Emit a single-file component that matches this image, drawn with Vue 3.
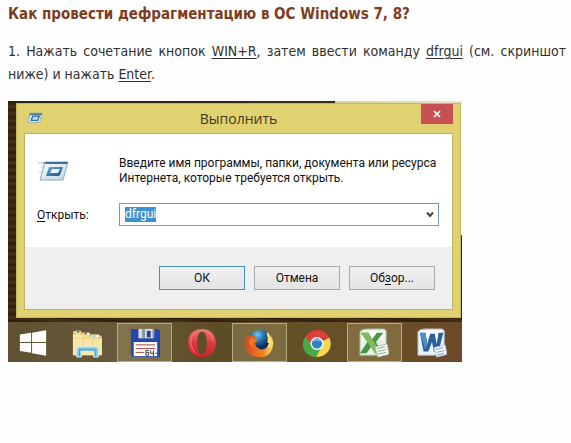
<script setup>
import { onMounted, ref } from 'vue'

const command = ref('dfrgui')
const field = ref(null)

onMounted(() => {
  field.value.focus()
  field.value.select()
})
</script>

<template>
  <main class="article">
    <h1 class="title">Как провести дефрагментацию в ОС Windows 7, 8?</h1>
    <p class="step">
      1. Нажать сочетание кнопок <u>WIN+R</u>, затем ввести команду <u>dfrgui</u> (см. скриншот
      ниже) и нажать <u>Enter</u>.
    </p>

    <div class="desktop">
      <form class="dialog" @submit.prevent>
        <header class="titlebar">
          <svg class="small-icon" viewBox="0 0 34 24" aria-hidden="true">
            <path d="M7 2H32L27 21H2Z" fill="#edf4f8" stroke="#8eabb9" stroke-width="2" />
            <path d="M6 2H32L31 6H5Z" fill="#427fac" />
            <path d="M12 8H26L23 17H9Z" fill="#bddcf1" stroke="#2f6f9f" stroke-width="3" />
          </svg>
          <h2 class="caption">Выполнить</h2>
          <button class="close" type="button" aria-label="Закрыть">
            <svg viewBox="0 0 8 8" aria-hidden="true"><path d="M1 1L7 7M7 1L1 7" stroke="#fff" stroke-width="1.7" /></svg>
          </button>
        </header>

        <div class="client">
          <div class="content">
            <svg class="run-icon" viewBox="0 0 34 24" aria-hidden="true">
              <defs>
                <linearGradient id="run-frame" x2="1" y2="1">
                  <stop stop-color="#fff" /><stop offset="1" stop-color="#bdd4e0" />
                </linearGradient>
                <linearGradient id="run-screen" x2="1" y2="1">
                  <stop stop-color="#6daed6" /><stop offset="1" stop-color="#174f83" />
                </linearGradient>
              </defs>
              <path d="M8 3H31L26 21H3Z" fill="url(#run-frame)" stroke="#89aabd" />
              <path d="M7 3H31L30 5H6Z" fill="#336f9f" />
              <path d="M1 4H9M4 8H8M2 13H6" stroke="#a9c4d2" />
              <path d="M12 8H26L23 16Q22 17 21 17H9Z" fill="url(#run-screen)" />
              <path d="M15 10H23L21 14H13Z" fill="#e9f5fc" />
            </svg>
            <p class="prompt">Введите имя программы, папки, документа или ресурса<br>Интернета, которые требуется открыть.</p>
            <label class="label" for="command"><u>О</u>ткрыть:</label>
            <div class="combo">
              <input id="command" ref="field" v-model="command" type="text" autocomplete="off" spellcheck="false">
              <button class="arrow" type="button" aria-label="Показать список">
                <svg viewBox="0 0 8 7" aria-hidden="true"><path d="M1 1.5L4 5L7 1.5" fill="none" stroke="#444" stroke-width="2" /></svg>
              </button>
            </div>
          </div>
          <footer class="actions">
            <button class="action primary" type="submit">ОК</button>
            <button class="action" type="button">Отмена</button>
            <button class="action" type="button">Об<u>з</u>ор...</button>
          </footer>
        </div>
      </form>

      <nav class="taskbar">
        <button class="task" type="button" aria-label="Пуск">
          <svg viewBox="0 0 32 32" aria-hidden="true">
            <path d="M2 7L14 5V15H2ZM15 5L30 2.5V15H15ZM2 16H14V26.5L2 24.5ZM15 16H30V29.5L15 27Z" fill="#fff" />
          </svg>
        </button>
        <button class="task" type="button" aria-label="Проводник">
          <svg viewBox="0 0 32 32" aria-hidden="true">
            <path d="M1 5Q1 3 3 3H9L11 5H16L18 7H24L26 8H30Q32 8 32 10V29H1Z" fill="#dec16a" />
            <path d="M4 3H9V6H4Z" fill="#fffbe5" /><path d="M5 3H8V5H5Z" fill="#438b45" />
            <path d="M12 5H19V8H12Z" fill="#fffbe5" /><path d="M13 5H16V7H13Z" fill="#b4513c" />
            <path d="M21 7H29V10H21Z" fill="#fffbe5" /><path d="M22 8H25V9H22Z" fill="#498ac2" />
            <path d="M1 7H12L14 9H21L23 11H32V29H1Z" fill="#f7e8a7" />
            <path d="M2 11H31M12 8V19M22 12V20" stroke="#e8cf7f" fill="none" />
            <path d="M5 31V23Q5 20 8 20H25Q28 20 28 23V31H23V25H10V31Z" fill="#83c6e2" stroke="#d3f1f9" />
            <path d="M8 23H25V30M8 23V30" fill="none" stroke="#4b9fc7" />
          </svg>
        </button>
        <button class="task open" type="button" aria-label="Файловый менеджер">
          <svg viewBox="0 0 32 32" aria-hidden="true">
            <path d="M1 1H30L32 3V31H3L1 29Z" fill="#2347b0" />
            <path d="M9 1H25V11H9Z" fill="#d6dce3" /><path d="M13 1H16V11H13ZM24 1H26V11H24Z" fill="#8594a8" />
            <path d="M18 3H22V10H18Z" fill="#233e91" />
            <path d="M4 15H29V30H4Z" fill="#fffdf5" />
            <path d="M6 18H27M6 22H27M6 26H15" stroke="#973a43" />
            <path d="M20 24H17V29H20V26H17M22 24V27H25M25 24V30M27 27H29" fill="none" stroke="#383838" />
          </svg>
        </button>
        <button class="task" type="button" aria-label="Opera">
          <svg viewBox="0 0 32 32" aria-hidden="true">
            <defs><linearGradient id="opera-red" x2="0" y2="1"><stop stop-color="#f37870" /><stop offset=".5" stop-color="#dd3a3c" /><stop offset="1" stop-color="#c8242b" /></linearGradient></defs>
            <path fill-rule="evenodd" d="M16 1C7 1 1 7 1 16S7 31 16 31 31 25 31 16 25 1 16 1ZM16 4C20 4 21 9 21 16S20 28 16 28 11 23 11 16 12 4 16 4Z" fill="url(#opera-red)" />
            <path d="M9 5Q4 8 4 16Q5 23 9 27M23 5Q27 8 28 15" fill="none" stroke="#ff9a8e" opacity=".7" />
          </svg>
        </button>
        <button class="task open" type="button" aria-label="Firefox">
          <svg viewBox="0 0 32 32" aria-hidden="true">
            <defs>
              <radialGradient id="fox-blue" cx=".4" cy=".2"><stop stop-color="#70c5ea" /><stop offset=".5" stop-color="#267bb5" /><stop offset="1" stop-color="#142e63" /></radialGradient>
              <linearGradient id="fox-orange"><stop stop-color="#d94424" /><stop offset=".65" stop-color="#f38620" /><stop offset="1" stop-color="#ffe16b" /></linearGradient>
            </defs>
            <circle cx="17" cy="15" r="13" fill="url(#fox-blue)" />
            <path d="M3 6L7 9Q9 7 12 8L11 11L15 13L12 16Q12 20 16 22Q22 25 26 18Q29 12 25 5Q32 10 31 18Q29 31 17 31Q2 31 1 17Q1 10 4 8Z" fill="url(#fox-orange)" />
            <path d="M7 10Q10 12 14 13L10 16Q9 20 13 23Q8 21 5 16Z" fill="#ef7624" />
            <path d="M25 5Q27 10 26 16M28 11Q29 16 26 21" fill="none" stroke="#ffe77a" stroke-width="2" />
          </svg>
        </button>
        <button class="task" type="button" aria-label="Chrome">
          <svg viewBox="0 0 32 32" aria-hidden="true">
            <path d="M16 17L4 9Q9 1 18 2Q26 3 29 10Z" fill="#ce2d2e" />
            <path d="M16 17L29 10Q33 18 28 25Q23 31 15 31Z" fill="#f8d64b" />
            <path d="M16 17L15 31Q6 31 2 23Q-1 15 4 9Z" fill="#49a948" />
            <path d="M16 17L21 20L15 31Q12 31 10 29Z" fill="#49a948" />
            <path d="M16 10H29L27 7Q21 1 13 3Q7 5 4 9L10 18Z" fill="#dc413b" />
            <circle cx="16" cy="16.5" r="7" fill="#fff" /><circle cx="16" cy="16.5" r="5.5" fill="#327fbe" />
            <path d="M12 14Q16 10 20 14" fill="none" stroke="#80bce3" stroke-width="2" />
          </svg>
        </button>
        <button class="task open" type="button" aria-label="Excel">
          <svg viewBox="0 0 32 32" aria-hidden="true">
            <path d="M1 4Q3 1 10 1H27L29 3V29H1Z" fill="#e8f2e5" stroke="#9fbc97" />
            <path d="M4 5Q15 2 26 4V12H4Z" fill="#fff" />
            <path d="M2 5H10L14 12L19 5H26L18 15L25 27H17L13 20L8 27H1L9 15Z" fill="#479447" />
            <path d="M2 5H10L16 15L23 27H17L9 15Z" fill="#82b85e" />
            <path d="M17 20L30 17L32 28L20 31Z" fill="#fbfdf9" stroke="#a6baa2" />
            <path d="M19 22L28 20M20 25L29 23M20 28L29 26" stroke="#81a87b" />
          </svg>
        </button>
        <button class="task" type="button" aria-label="Word">
          <svg viewBox="0 0 32 32" aria-hidden="true">
            <path d="M1 4Q3 1 10 1H27L29 3V29H1Z" fill="#eaf1f7" stroke="#aebfce" />
            <path d="M3 4Q16 2 26 3V14H3Z" fill="#fff" />
            <path d="M3 5H9L11 17L14 6H19L21 17L23 5H28L23 25H18L16 15L12 25H7Z" fill="#275f9f" />
            <path d="M3 5H9L11 17L9 23Z" fill="#4e91c8" />
            <path d="M18 21L30 18L32 28L21 31Z" fill="#fafdff" stroke="#aebfd0" />
            <path d="M20 23L28 21M21 26L29 24M21 29L29 27" stroke="#7594b1" />
          </svg>
        </button>
      </nav>
    </div>
  </main>
</template>

<style>
body {
  margin: 0;
  background: #fefefe;
}
</style>

<style scoped>
.article {
  padding: 4px 5px 0 8px;
  font-family: "DejaVu Sans Condensed", "DejaVu Sans", sans-serif;
  color: #303030;
}
.title {
  margin: 0;
  font-size: 15px;
  line-height: 20px;
  font-weight: 700;
  color: #7d3d21;
}
.step {
  margin: 16px 0 15px;
  font-size: 14px;
  line-height: 23px;
  text-align: justify;
}
u {
  text-underline-offset: 2px;
}
button {
  padding: 0;
  border: 0;
  font: inherit;
  color: inherit;
  background: none;
}
svg {
  display: block;
}
.desktop {
  max-width: 454px;
  background: linear-gradient(90deg, #2b2110, #382c16 72%, #d9d19b 72%, #e9e4c4) top / 100% 2px no-repeat,
    linear-gradient(#fefefe, #fefefe) right top / 1px 134px no-repeat,
    repeating-linear-gradient(4deg, #35210f 0, #453018 3px, #2c1c0d 7px);
  padding-top: 2px;
  font-family: Roboto, "Open Sans", sans-serif;
  font-size: 12px;
  color: #111;
}
.dialog {
  margin: 0 1px 4px 8px;
  padding: 0 7px 7px;
  border: 1px solid #c4b75d;
  background: #e0d271;
}
.titlebar {
  display: grid;
  grid-template-columns: 32px 1fr 32px;
  align-items: start;
  height: 29px;
}
.small-icon {
  width: 16px;
  height: 12px;
  margin: 8px 0 0 3px;
}
.caption {
  margin: 4px 0 0;
  font-family: "Open Sans", "Noto Sans", sans-serif;
  font-size: 14px;
  line-height: 22px;
  font-weight: 400;
  text-align: center;
  color: #3e391f;
}
.close {
  display: grid;
  place-items: center;
  height: 20px;
  background: #c75052;
}
.close svg {
  width: 8px;
  height: 8px;
}
.client {
  border: 1px solid #c0b45f;
  background: #fff;
}
.content {
  display: grid;
  grid-template-columns: 82px 1fr;
  align-items: center;
  row-gap: 17px;
  padding: 22px 13px 21px 12px;
}
.run-icon {
  width: 34px;
  height: 24px;
}
.prompt {
  margin: 0;
  line-height: 15px;
}
.label {
  line-height: 16px;
}
.combo {
  display: flex;
  height: 21px;
  border: 1px solid #779cb0;
}
.combo input {
  flex: 1;
  min-width: 0;
  margin: 3px 0;
  padding: 0 5px;
  border: 0;
  outline: 0;
  font: inherit;
  line-height: 15px;
  color: #111;
  background: none;
}
.combo input::selection {
  color: #fff;
  background: #3c91d0;
}
.arrow {
  display: grid;
  place-items: center;
  width: 16px;
}
.arrow svg {
  width: 8px;
  height: 7px;
}
.actions {
  display: flex;
  justify-content: flex-end;
  gap: 9px;
  padding: 19px 17px;
  background: #efefef;
}
.action {
  width: 86px;
  height: 24px;
  border: 1px solid #a9a9a9;
  background: linear-gradient(#f0f0f0, #e4e4e4);
}
.primary {
  border-color: #4b91bd;
}
.taskbar {
  display: grid;
  grid-template-columns: 52px repeat(7, 1fr);
  height: 40px;
  background: linear-gradient(90deg, #5e5232, #68593a 25%, #5c4d26 45%, #665027 70%, #6b4a27);
}
.task {
  display: grid;
  place-items: center;
  margin: 1px 3px 0 0;
  border: 1px solid transparent;
}
.open {
  border-color: #b5aa84;
  background: rgba(190, 174, 124, .3);
}
.task svg {
  width: 30px;
  height: 30px;
}
</style>
